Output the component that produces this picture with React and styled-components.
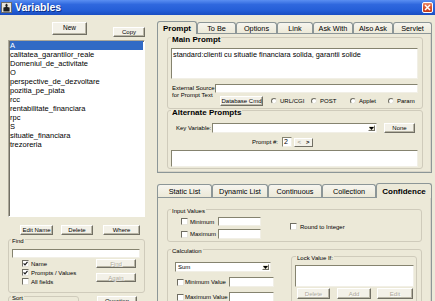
import React from 'react';
import styled, { createGlobalStyle } from 'styled-components';

const BG = '#ece9d8';

const GlobalStyle = createGlobalStyle`
  * { box-sizing: border-box; }
  html, body { margin: 0; padding: 0; background: ${BG}; overflow: hidden; }
  body { font-family: "Liberation Sans", Arial, sans-serif; font-size: 6px; color: #000; }
`;

const Window = styled.div`
  width: 435px;
  height: 301px;
  display: flex;
  flex-direction: column;
  background: ${BG};
  overflow: hidden;
`;

const TitleBar = styled.div`
  flex: none;
  height: 15px;
  display: flex;
  align-items: center;
  gap: 3px;
  padding: 0 2px 0 1px;
  background: linear-gradient(180deg, #5a8ff2 0%, #2f68de 30%, #245ed7 70%, #1a4ec2 100%);
`;

const TitleText = styled.span`
  flex: 1;
  color: #fff;
  font-weight: bold;
  font-size: 10.5px;
  line-height: 15px;
  text-shadow: 1px 1px 0 #0d2f86;
`;

const CloseButton = styled.div`
  flex: none;
  width: 11px;
  height: 11px;
  border: 1px solid #fff;
  border-radius: 2px;
  background: linear-gradient(180deg, #ec8d70 0%, #da5430 45%, #c23c1c 100%);
  display: flex;
  align-items: center;
  justify-content: center;
`;

const Body = styled.div`
  flex: 1;
  min-height: 0;
  display: flex;
`;

const LeftPane = styled.div`
  flex: none;
  width: 157px;
  padding: 7px 0 0 8px;
  display: flex;
  flex-direction: column;
`;

const RightPane = styled.div`
  flex: 1;
  min-width: 0;
  display: flex;
  flex-direction: column;
  padding: 6px 3px 0 0;
  overflow: hidden;
`;

const Row = styled.div`
  flex: none;
  display: flex;
  align-items: ${p => p.$align || 'center'};
  height: ${p => (p.$h ? `${p.$h}px` : 'auto')};
  margin-top: ${p => p.$mt || 0}px;
  padding-left: ${p => p.$pl || 0}px;
`;

const Col = styled.div`
  flex: none;
  display: flex;
  flex-direction: column;
  width: ${p => (p.$w ? `${p.$w}px` : 'auto')};
  margin-top: ${p => p.$mt || 0}px;
  margin-left: ${p => p.$ml || 0}px;
`;

const Btn = styled.button`
  flex: none;
  width: ${p => p.$w}px;
  height: ${p => p.$h || 10}px;
  margin: ${p => p.$mt || 0}px 0 0 ${p => p.$ml || 0}px;
  padding: 0;
  font-family: inherit;
  font-size: ${p => p.$fs || 6}px;
  line-height: 1;
  color: ${p => (p.disabled ? '#aca899' : '#000')};
  text-shadow: ${p => (p.disabled ? '1px 1px 0 #fff' : 'none')};
  background: #f3f1e8;
  border: 1px solid;
  border-color: #fff #716f64 #716f64 #fff;
  box-shadow: inset -1px -1px 0 #b9b6a6;
  display: flex;
  align-items: center;
  justify-content: center;
  white-space: nowrap;
`;

const ListBox = styled.div`
  flex: none;
  width: 137px;
  height: 177px;
  background: #fff;
  border: 1px solid;
  border-color: #aca899 #fff #fff #aca899;
  box-shadow: inset 1px 1px 0 #716f64;
  padding: 0 1px 0 1px;
  overflow: hidden;
`;

const ListItem = styled.div`
  height: 9px;
  line-height: 9px;
  font-size: 7.5px;
  white-space: nowrap;
  background: ${p => (p.$sel ? '#316ac5' : 'transparent')};
  color: ${p => (p.$sel ? '#fff' : '#000')};
`;

const Group = styled.div`
  flex: none;
  display: flex;
  flex-direction: column;
  width: ${p => (p.$w ? `${p.$w}px` : 'auto')};
  height: ${p => p.$h}px;
  margin: ${p => p.$mt || 0}px 0 0 ${p => p.$ml || 0}px;
  padding: 0 ${p => p.$pr ?? 3}px 0 ${p => p.$pl ?? 3}px;
  border: 1px solid #cfcbbb;
  border-radius: 3px;
`;

const GroupLabel = styled.div`
  flex: none;
  align-self: flex-start;
  margin: -2px 0 0 ${p => p.$ml || 0}px;
  padding: 0 1px;
  background: ${BG};
  font-size: ${p => (p.$bold ? '8px' : '6px')};
  font-weight: ${p => (p.$bold ? 'bold' : 'normal')};
  line-height: ${p => (p.$bold ? '8px' : '7px')};
  white-space: nowrap;
`;

const TextBox = styled.div`
  flex: none;
  width: ${p => (p.$w ? `${p.$w}px` : 'auto')};
  height: ${p => p.$h}px;
  margin: ${p => p.$mt || 0}px 0 0 ${p => p.$ml || 0}px;
  background: #fff;
  border: 1px solid;
  border-color: #85836f #f1efe6 #f1efe6 #85836f;
  font-size: 7.3px;
  line-height: 8px;
  padding: 2px 1px;
  white-space: nowrap;
  overflow: hidden;
`;

const Combo = styled.div`
  flex: none;
  width: ${p => p.$w}px;
  height: ${p => p.$h || 10}px;
  margin: ${p => p.$mt || 0}px 0 0 ${p => p.$ml || 0}px;
  display: flex;
  align-items: stretch;
  background: #fff;
  border: 1px solid;
  border-color: #85836f #f1efe6 #f1efe6 #85836f;
  padding: 1px;
`;

const ComboText = styled.span`
  flex: 1;
  font-size: 6px;
  line-height: 6px;
  padding-left: 1px;
  display: flex;
  align-items: center;
`;

const ComboArrow = styled.span`
  flex: none;
  width: 7px;
  background: ${BG};
  border: 1px solid;
  border-color: #fff #716f64 #716f64 #fff;
  display: flex;
  align-items: center;
  justify-content: center;
`;

const TabStrip = styled.div`
  flex: none;
  display: flex;
  align-items: flex-end;
  height: ${p => p.$h}px;
  margin-top: ${p => p.$mt || 0}px;
`;

const Tab = styled.div`
  flex: none;
  width: ${p => p.$w}px;
  height: ${p => (p.$active ? p.$h + 2 : p.$h)}px;
  margin-bottom: ${p => (p.$active ? -1 : 0)}px;
  position: relative;
  z-index: ${p => (p.$active ? 1 : 0)};
  display: flex;
  align-items: center;
  justify-content: center;
  border: 1px solid #8c9697;
  border-bottom: none;
  border-radius: 3px 3px 0 0;
  background: ${p => (p.$active ? BG : 'linear-gradient(180deg, #f6f5ef 0%, #ece9d8 100%)')};
  font-size: ${p => (p.$active ? '8px' : '7.3px')};
  font-weight: ${p => (p.$active ? 'bold' : 'normal')};
  white-space: nowrap;
`;

const TabPanel = styled.div`
  flex: none;
  height: ${p => p.$h}px;
  display: flex;
  flex-direction: column;
  border: 1px solid #8c9697;
  box-shadow: inset -1px -1px 0 #d8d5c8;
  padding: ${p => p.$pt}px ${p => p.$pr}px 0 9px;
`;

const FieldLabel = styled.span`
  flex: none;
  width: ${p => (p.$w ? `${p.$w}px` : 'auto')};
  padding: 0 ${p => p.$pr || 0}px 0 ${p => p.$pl || 0}px;
  text-align: ${p => p.$right ? 'right' : 'left'};
  font-size: 6px;
  line-height: 7px;
  white-space: nowrap;
`;

const TwoLineLabel = styled.span`
  grid-row: 1 / span 2;
  font-size: 6px;
  line-height: 7px;
  padding: 1px 0 0 1px;
`;

const ExtGrid = styled.div`
  flex: none;
  display: grid;
  grid-template-columns: 44px 1fr;
  grid-template-rows: 9px 10px;
  row-gap: 3px;
  margin-top: 5px;
`;

const RadioItem = styled.span`
  flex: none;
  width: ${p => (p.$w ? `${p.$w}px` : 'auto')};
  margin-left: ${p => p.$ml || 0}px;
  display: flex;
  align-items: center;
  gap: 3px;
  font-size: 6px;
  white-space: nowrap;
`;

const RadioCircle = styled.span`
  flex: none;
  width: 6px;
  height: 6px;
  border-radius: 50%;
  background: #fff;
  border: 1px solid;
  border-color: #6f6d62 #e6e4da #e6e4da #6f6d62;
`;

const CheckItem = styled.span`
  flex: none;
  display: flex;
  align-items: center;
  height: ${p => p.$h || 9}px;
  margin: ${p => p.$mt || 0}px 0 ${p => p.$mb || 0}px ${p => p.$ml || 0}px;
  align-self: ${p => p.$self || 'auto'};
  gap: ${p => p.$gap ?? 2}px;
  font-size: 6px;
  white-space: nowrap;
`;

const CheckBoxBox = styled.span`
  flex: none;
  width: 7px;
  height: 7px;
  background: #fff;
  border: 1px solid;
  border-color: #6f6d62 #e6e4da #e6e4da #6f6d62;
  display: flex;
  align-items: center;
  justify-content: center;
`;

const CheckText = styled.span`
  flex: none;
  width: ${p => (p.$w ? `${p.$w}px` : 'auto')};
`;

const SpinBox = styled.div`
  flex: none;
  width: 10px;
  height: 10px;
  background: #fff;
  border: 1px solid;
  border-color: #85836f #f1efe6 #f1efe6 #85836f;
  font-size: 7px;
  line-height: 8px;
  padding-left: 1px;
`;

const SpinButtons = styled.div`
  flex: none;
  width: 19px;
  height: 9px;
  margin-left: 2px;
  display: flex;
  align-items: center;
  justify-content: space-around;
  background: #f3f1e8;
  border: 1px solid;
  border-color: #fff #716f64 #716f64 #fff;
  font-size: 6px;
  font-weight: bold;
`;

const SpinGlyph = styled.span`
  color: ${p => (p.$dim ? '#aca899' : '#000')};
`;

const Check = ({ checked }) => (
  <CheckBoxBox>
    {checked && (
      <svg width="5" height="5" viewBox="0 0 5 5">
        <path d="M0.6 2.3 L2 3.8 L4.5 0.9" stroke="#1a1a1a" strokeWidth="1.2" fill="none" />
      </svg>
    )}
  </CheckBoxBox>
);

const Arrow = () => (
  <svg width="5" height="3" viewBox="0 0 5 3">
    <path d="M0 0 L5 0 L2.5 3 Z" fill="#000" />
  </svg>
);

const items = [
  'A',
  'calitatea_garantilor_reale',
  'Domeniul_de_activitate',
  'O',
  'perspective_de_dezvoltare',
  'pozitia_pe_piata',
  'rcc',
  'rentabilitate_financiara',
  'rpc',
  'S',
  'situatie_financiara',
  'trezoreria',
];

const topTabs = [
  ['Prompt', 40, true],
  ['To Be', 39],
  ['Options', 41],
  ['Link', 36],
  ['Ask With', 40],
  ['Also Ask', 40],
  ['Servlet', 39],
];

const bottomTabs = [
  ['Static List', 55],
  ['Dynamic List', 56],
  ['Continuous', 54],
  ['Collection', 54],
  ['Confidence', 56, true],
];

export default function App() {
  return (
    <Window>
      <GlobalStyle />
      <TitleBar>
        <svg width="11" height="11" viewBox="0 0 11 11">
          <rect x="0.5" y="0.5" width="10" height="10" fill="#e9e5d9" stroke="#6b6b6b" />
          <path d="M5.5 1.5 L7.2 3.6 L6.3 3.6 L6.3 5 L8.6 5.6 L8.6 9.5 L2.4 9.5 L2.4 5.6 L4.7 5 L4.7 3.6 L3.8 3.6 Z" fill="#1e1e1e" />
        </svg>
        <TitleText>Variables</TitleText>
        <CloseButton>
          <svg width="7" height="7" viewBox="0 0 7 7">
            <path d="M1 1 L6 6 M6 1 L1 6" stroke="#fff" strokeWidth="1.5" />
          </svg>
        </CloseButton>
      </TitleBar>
      <Body>
        <LeftPane>
          <Row $h={18} $align="flex-start">
            <Btn $w={35} $h={13} $ml={44} $fs={6.5}>New</Btn>
            <Btn $w={32} $h={10} $ml={26} $mt={5}>Copy</Btn>
          </Row>
          <ListBox>
            {items.map((it, i) => (
              <ListItem key={it} $sel={i === 0}>{it}</ListItem>
            ))}
          </ListBox>
          <Row $h={10} $mt={8} $pl={12}>
            <Btn $w={33}>Edit Name</Btn>
            <Btn $w={32} $ml={8}>Delete</Btn>
            <Btn $w={37} $ml={10}>Where</Btn>
          </Row>
          <Group $w={137} $h={54} $mt={4}>
            <GroupLabel $ml={-1}>Find</GroupLabel>
            <TextBox $w={128} $h={9} $mt={4} />
            <Row $mt={1} $align="flex-start">
              <Col $w={74} $ml={10}>
                <CheckItem><Check checked /><span>Name</span></CheckItem>
                <CheckItem><Check checked /><span>Prompts / Values</span></CheckItem>
                <CheckItem><Check /><span>All fields</span></CheckItem>
              </Col>
              <Col>
                <Btn $w={40} $h={9} disabled>Find</Btn>
                <Btn $w={40} $h={9} $mt={5} disabled>Again</Btn>
              </Col>
            </Row>
          </Group>
          <Row $mt={3} $align="flex-start">
            <Group $w={71} $h={20}>
              <GroupLabel $ml={-1}>Sort</GroupLabel>
            </Group>
            <Btn $w={40} $h={10} $ml={18}>Question</Btn>
          </Row>
        </LeftPane>
        <RightPane>
          <TabStrip $h={12}>
            {topTabs.map(([t, w, a]) => (
              <Tab key={t} $w={w} $h={11} $active={a}>{t}</Tab>
            ))}
          </TabStrip>
          <TabPanel $h={140} $pt={3} $pr={8}>
            <Group $h={72} $pl={3} $pr={4}>
              <GroupLabel $bold>Main Prompt</GroupLabel>
              <TextBox $w={247} $h={31} $mt={4}>
                standard:clienti cu situatie financiara solida, garantii solide
              </TextBox>
              <ExtGrid>
                <TwoLineLabel>External Source<br />for Prompt Text</TwoLineLabel>
                <TextBox $h={9} />
                <Row>
                  <Btn $w={43} $h={10} $ml={5}>Database Cmd</Btn>
                  <RadioItem $w={40} $ml={8}><RadioCircle />URL/CGI</RadioItem>
                  <RadioItem $w={39}><RadioCircle />POST</RadioItem>
                  <RadioItem $w={38}><RadioCircle />Applet</RadioItem>
                  <RadioItem><RadioCircle />Param</RadioItem>
                </Row>
              </ExtGrid>
            </Group>
            <Group $h={59} $mt={1} $pl={3} $pr={4}>
              <GroupLabel $bold>Alternate Prompts</GroupLabel>
              <Row $h={10} $mt={6}>
                <FieldLabel $w={41} $pl={5}>Key Variable:</FieldLabel>
                <Combo $w={165}>
                  <ComboText />
                  <ComboArrow><Arrow /></ComboArrow>
                </Combo>
                <Btn $w={31} $h={10} $ml={7}>None</Btn>
              </Row>
              <Row $h={10} $mt={4}>
                <FieldLabel $w={111} $pr={4} $right>Prompt #:</FieldLabel>
                <SpinBox>2</SpinBox>
                <SpinButtons>
                  <SpinGlyph $dim>&lt;</SpinGlyph>
                  <SpinGlyph>&gt;</SpinGlyph>
                </SpinButtons>
              </Row>
              <TextBox $w={247} $h={17} $mt={3} />
            </Group>
          </TabPanel>
          <TabStrip $h={14} $mt={10}>
            {bottomTabs.map(([t, w, a]) => (
              <Tab key={t} $w={w} $h={13} $active={a}>{t}</Tab>
            ))}
          </TabStrip>
          <TabPanel $h={130} $pt={11} $pr={9}>
            <Group $h={33}>
              <GroupLabel>Input Values</GroupLabel>
              <Row $align="stretch">
                <Col $w={119} $mt={2}>
                  <CheckItem $ml={10}>
                    <Check />
                    <CheckText $w={26}>Minimum</CheckText>
                    <TextBox $w={43} $h={9} />
                  </CheckItem>
                  <CheckItem $ml={10} $mt={3} $h={10}>
                    <Check />
                    <CheckText $w={26}>Maximum</CheckText>
                    <TextBox $w={43} $h={10} />
                  </CheckItem>
                </Col>
                <CheckItem $self="center" $gap={3} $mb={1}>
                  <Check />
                  <span>Round to Integer</span>
                </CheckItem>
              </Row>
            </Group>
            <Group $h={70} $mt={7}>
              <GroupLabel>Calculation</GroupLabel>
              <Row $align="flex-start">
                <Col $w={120}>
                  <Combo $w={96} $ml={4} $mt={7}>
                    <ComboText>Sum</ComboText>
                    <ComboArrow><Arrow /></ComboArrow>
                  </Combo>
                  <CheckItem $ml={6} $mt={5} $h={10} $gap={1}>
                    <Check />
                    <CheckText $w={43}>Minimum Value</CheckText>
                    <TextBox $w={45} $h={10} />
                  </CheckItem>
                  <CheckItem $ml={6} $mt={5} $h={10} $gap={1}>
                    <Check />
                    <CheckText $w={43}>Maximum Value</CheckText>
                    <TextBox $w={45} $h={10} />
                  </CheckItem>
                </Col>
                <Group $w={126} $h={48} $mt={1} $pl={3} $pr={2}>
                  <GroupLabel $ml={1}>Lock Value If:</GroupLabel>
                  <TextBox $w={119} $h={22} $mt={3} />
                  <Row $h={11} $mt={1}>
                    <Btn $w={33} $h={11} $ml={2} disabled>Delete</Btn>
                    <Btn $w={34} $h={11} $ml={7} disabled>Add</Btn>
                    <Btn $w={36} $h={11} $ml={6} disabled>Edit</Btn>
                  </Row>
                </Group>
              </Row>
            </Group>
          </TabPanel>
        </RightPane>
      </Body>
    </Window>
  );
}
